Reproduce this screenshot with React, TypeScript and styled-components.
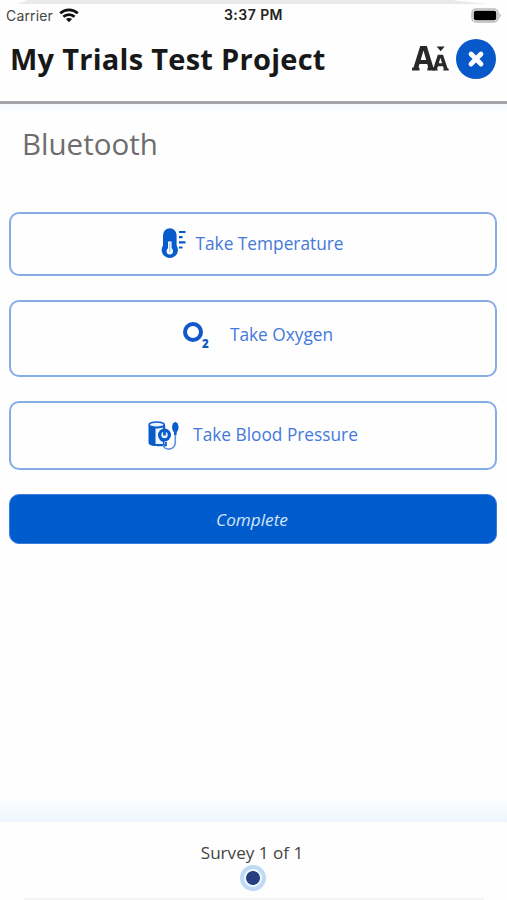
import React from 'react';
import styled, { createGlobalStyle } from 'styled-components';

const GlobalStyle = createGlobalStyle`
  * { box-sizing: border-box; }
  body { margin: 0; background: #fefefe; }
`;

const Screen = styled.div`
  width: 507px;
  height: 900px;
  display: flex;
  flex-direction: column;
  overflow: hidden;
  background: #fefefe;
  font-family: 'Open Sans', sans-serif;
`;

const TopEdge = styled.div`
  height: 4px;
  margin: 0 20px 0 18px;
  background: #e9e9e9;
  clip-path: polygon(0 100%, 10px 0, calc(100% - 36px) 0, 100% 100%);
  flex: none;
`;

const StatusBar = styled.div`
  height: 22px;
  flex: none;
  display: grid;
  grid-template-columns: 1fr auto 1fr;
  align-items: center;
  padding: 0 6px;
  font-family: Inter, sans-serif;
  font-size: 14px;
  line-height: 22px;
  color: #222;
`;

const Carrier = styled.div`
  display: flex;
  align-items: center;
  gap: 6px;
  color: #444;
  letter-spacing: 0.15px;
  padding-bottom: 1px;
`;

const Clock = styled.span`
  font-weight: 600;
  letter-spacing: 0.45px;
  padding-bottom: 2px;
`;

const BatteryIcon = styled.svg`
  justify-self: end;
  margin-bottom: 2px;
`;

const Header = styled.header`
  height: 78px;
  flex: none;
  display: flex;
  align-items: flex-start;
  padding: 10px 11px 0 10px;
  border-bottom: 3px solid #a5a6a9;
`;

const Title = styled.h1`
  flex: 1;
  margin: 0;
  font-size: 29px;
  line-height: 45px;
  font-weight: 700;
  letter-spacing: 0.27px;
  color: #181818;
  white-space: nowrap;
`;

const TextSizeIcon = styled.svg`
  margin: 10px 7px 0 0;
  overflow: visible;
`;

const CloseButton = styled.button`
  width: 40px;
  height: 40px;
  margin-top: 3px;
  padding: 0;
  border: 0;
  border-radius: 50%;
  background: #0759ca;
  display: grid;
  place-items: center;
`;

const Content = styled.main`
  flex: 1;
  display: flex;
  flex-direction: column;
  padding: 0 10px 0 9px;
  background: linear-gradient(#f7fbff, #fefefe 14px);
`;

const Heading = styled.h2`
  margin: 17px 0 46px 13px;
  font-size: 29.5px;
  line-height: 45px;
  font-weight: 400;
  color: #6d6d6d;
`;

const ActionButton = styled.button<{ $height: number; $gap: number; $right?: number; $left?: number; $lift?: number }>`
  height: ${(p) => p.$height}px;
  margin: 0 0 24px;
  padding: 0 ${(p) => p.$right ?? 0}px ${(p) => p.$lift ?? 0}px ${(p) => p.$left ?? 0}px;
  flex: none;
  display: flex;
  align-items: center;
  justify-content: center;
  gap: ${(p) => p.$gap}px;
  border: 2px solid #86ace6;
  border-radius: 10px;
  background: #fefefe;
  color: #4479da;
  font: 400 17.3px/24px 'Open Sans', sans-serif;
`;

const CompleteButton = styled.button`
  height: 50px;
  margin: 0;
  padding: 2px 2px 0 0;
  flex: none;
  border: 1px solid #3b7ddb;
  border-radius: 10px;
  background: #005ccd;
  color: #d3e4fb;
  font: italic 400 17.2px/24px 'Open Sans', sans-serif;
`;

const Shade = styled.div`
  height: 24px;
  flex: none;
  background: linear-gradient(#fefefe, #edf5fe);
`;

const Footer = styled.footer`
  height: 78px;
  flex: none;
  display: flex;
  flex-direction: column;
  align-items: center;
  padding: 19px 3px 0 0;
  font-size: 17.1px;
  line-height: 24px;
  color: #444;
`;

const PageDot = styled.span`
  width: 26px;
  height: 26px;
  margin: 0 0 0 2px;
  border: 4px solid #bfdaf4;
  border-radius: 50%;
  background: radial-gradient(circle, #263f80 6.5px, #f0f7fe 7.3px);
`;

const BottomRule = styled.div`
  width: 460px;
  height: 2px;
  margin: 7px 0 0 3px;
  background: #f4f4f4;
`;

const Wifi = () => (
  <svg width="20" height="15" viewBox="0 0 20 15" fill="none" stroke="#111" strokeWidth="2.8">
    <path d="M1.2 5.3C6.2.7 13.8.7 18.8 5.3" />
    <path d="M4.4 8.7C7.6 5.8 12.4 5.8 15.6 8.7" />
    <path d="M6.9 11.1C8.7 9.5 11.3 9.5 13.1 11.1L10 14.2Z" fill="#111" stroke="none" />
  </svg>
);

const Battery = () => (
  <BatteryIcon width="31" height="15" viewBox="0 0 31 15">
    <rect x="2" y="1" width="26" height="13" rx="4" fill="#eee" stroke="#bbb" strokeWidth="1.5" />
    <rect x="3.8" y="2.7" width="22.4" height="9.6" rx="2" fill="#000" />
    <path d="M29.5 5Q32 7.5 29.5 10Z" fill="#aaa" />
  </BatteryIcon>
);

const TextSize = () => (
  <TextSizeIcon width="37" height="25" viewBox="0 0 37 25" fill="#292929">
    <path fillRule="evenodd" d="M0 24.5V22L1.6 21.3L8.2 0H14.8L21.3 21.3L22.5 22V24.5H15.4V22L16.2 21.3L15.2 18H7.5L6.5 21.3L7.5 22V24.5ZM8.7 14H14.2L11.5 4.5Z" />
    <path fillRule="evenodd" d="M20.3 24.5V22.8L21.4 22.2L25.8 8.8H31L35.5 22.2L36.7 22.8V24.5H31.2L31.7 22.5L31 20.2H25.9L25.2 22.5L25.8 24.5ZM26.8 17.3H30.1L28.4 11.8Z" />
    <path d="M24.6 0.5H32.7L28.7 5.3Z" />
  </TextSizeIcon>
);

const Thermometer = () => (
  <svg width="25" height="32" viewBox="0 0 25 32" fill="none" stroke="#075bcb">
    <path d="M2 7a6.8 6.8 0 0 1 13.6 0V17.6a8.1 8.1 0 1 1-13.6 0Z" fill="#075bcb" stroke="none" />
    <path d="M8.8 13.5V22" stroke="#f4f8ff" strokeWidth="3.6" />
    <circle cx="8.8" cy="23.3" r="3.2" fill="#f4f8ff" stroke="none" />
    <path d="M8.8 15V24" stroke="#9bbcea" strokeWidth="1" />
    <path d="M18 4H24.5M18 9.2H21.5M18 14.3H24.5M18 19.5H21.5" strokeWidth="2.2" />
  </svg>
);

const OxygenSymbol = styled.span`
  display: flex;
  width: 27px;
  height: 28px;
  color: #1059ca;
`;

const Ring = styled.span`
  width: 20px;
  height: 20px;
  margin-top: 1px;
  border: 4px solid #1059ca;
  border-radius: 50%;
`;

const Subscript = styled.span`
  align-self: flex-end;
  margin: 0 0 -1px -1px;
  font-size: 11.5px;
  line-height: 12px;
  font-weight: 800;
`;

const BloodPressure = () => (
  <svg width="31" height="29" viewBox="0 0 31 29" fill="none" stroke="#1260cc">
    <path d="M1 4V22.5C2.5 24.5 6 24.5 11 24.5H16V4Z" fill="#075bcb" />
    <path d="M7 7.5Q12 7.5 15 6V9Q9.5 11.5 11 17Q12 20 15 21V23H7Z" fill="#eef5ff" stroke="none" />
    <path d="M1 4V22.5Q3 24.5 7.5 24.5V7Q3.5 7 1 4Z" fill="#075bcb" stroke="none" />
    <path d="M16.3 4V9M9 24.3H18V21" strokeWidth="1.8" />
    <ellipse cx="8.7" cy="3.7" rx="7.6" ry="2.7" fill="#eaf3ff" strokeWidth="1.6" />
    <circle cx="16.5" cy="14" r="6.5" fill="#075bcb" stroke="none" />
    <circle cx="16.5" cy="14" r="3.2" fill="#e9f2ff" stroke="none" />
    <path d="M16.5 9V14.5" strokeWidth="2.8" />
    <path d="M15 24C17 30.5 27.3 29 27.3 21V10" stroke="#5c91dc" strokeWidth="1.6" />
    <ellipse cx="27.3" cy="6.3" rx="3.2" ry="5.4" fill="#075bcb" stroke="none" />
    <path d="M27.3 9V14" strokeWidth="2.6" />
  </svg>
);

export default function App() {
  return (
    <>
      <GlobalStyle />
      <Screen>
        <TopEdge />
        <StatusBar>
          <Carrier>Carrier <Wifi /></Carrier>
          <Clock>3:37 PM</Clock>
          <Battery />
        </StatusBar>
        <Header>
          <Title>My Trials Test Project</Title>
          <TextSize />
          <CloseButton aria-label="Close">
            <svg width="18" height="18" viewBox="0 0 18 18" stroke="#fff" strokeWidth="4.8" strokeLinecap="round">
              <path d="M4 4L14 14M14 4L4 14" />
            </svg>
          </CloseButton>
        </Header>
        <Content>
          <Heading>Bluetooth</Heading>
          <ActionButton $height={64} $gap={9} $right={1}><Thermometer />Take Temperature</ActionButton>
          <ActionButton $height={77} $gap={20} $left={10} $lift={8}>
            <OxygenSymbol><Ring /><Subscript>2</Subscript></OxygenSymbol>
            <span>Take Oxygen</span>
          </ActionButton>
          <ActionButton $height={69} $gap={14} $lift={1}><BloodPressure />Take Blood Pressure</ActionButton>
          <CompleteButton>Complete</CompleteButton>
        </Content>
        <Shade />
        <Footer>
          Survey 1 of 1
          <PageDot />
          <BottomRule />
        </Footer>
      </Screen>
    </>
  );
}
